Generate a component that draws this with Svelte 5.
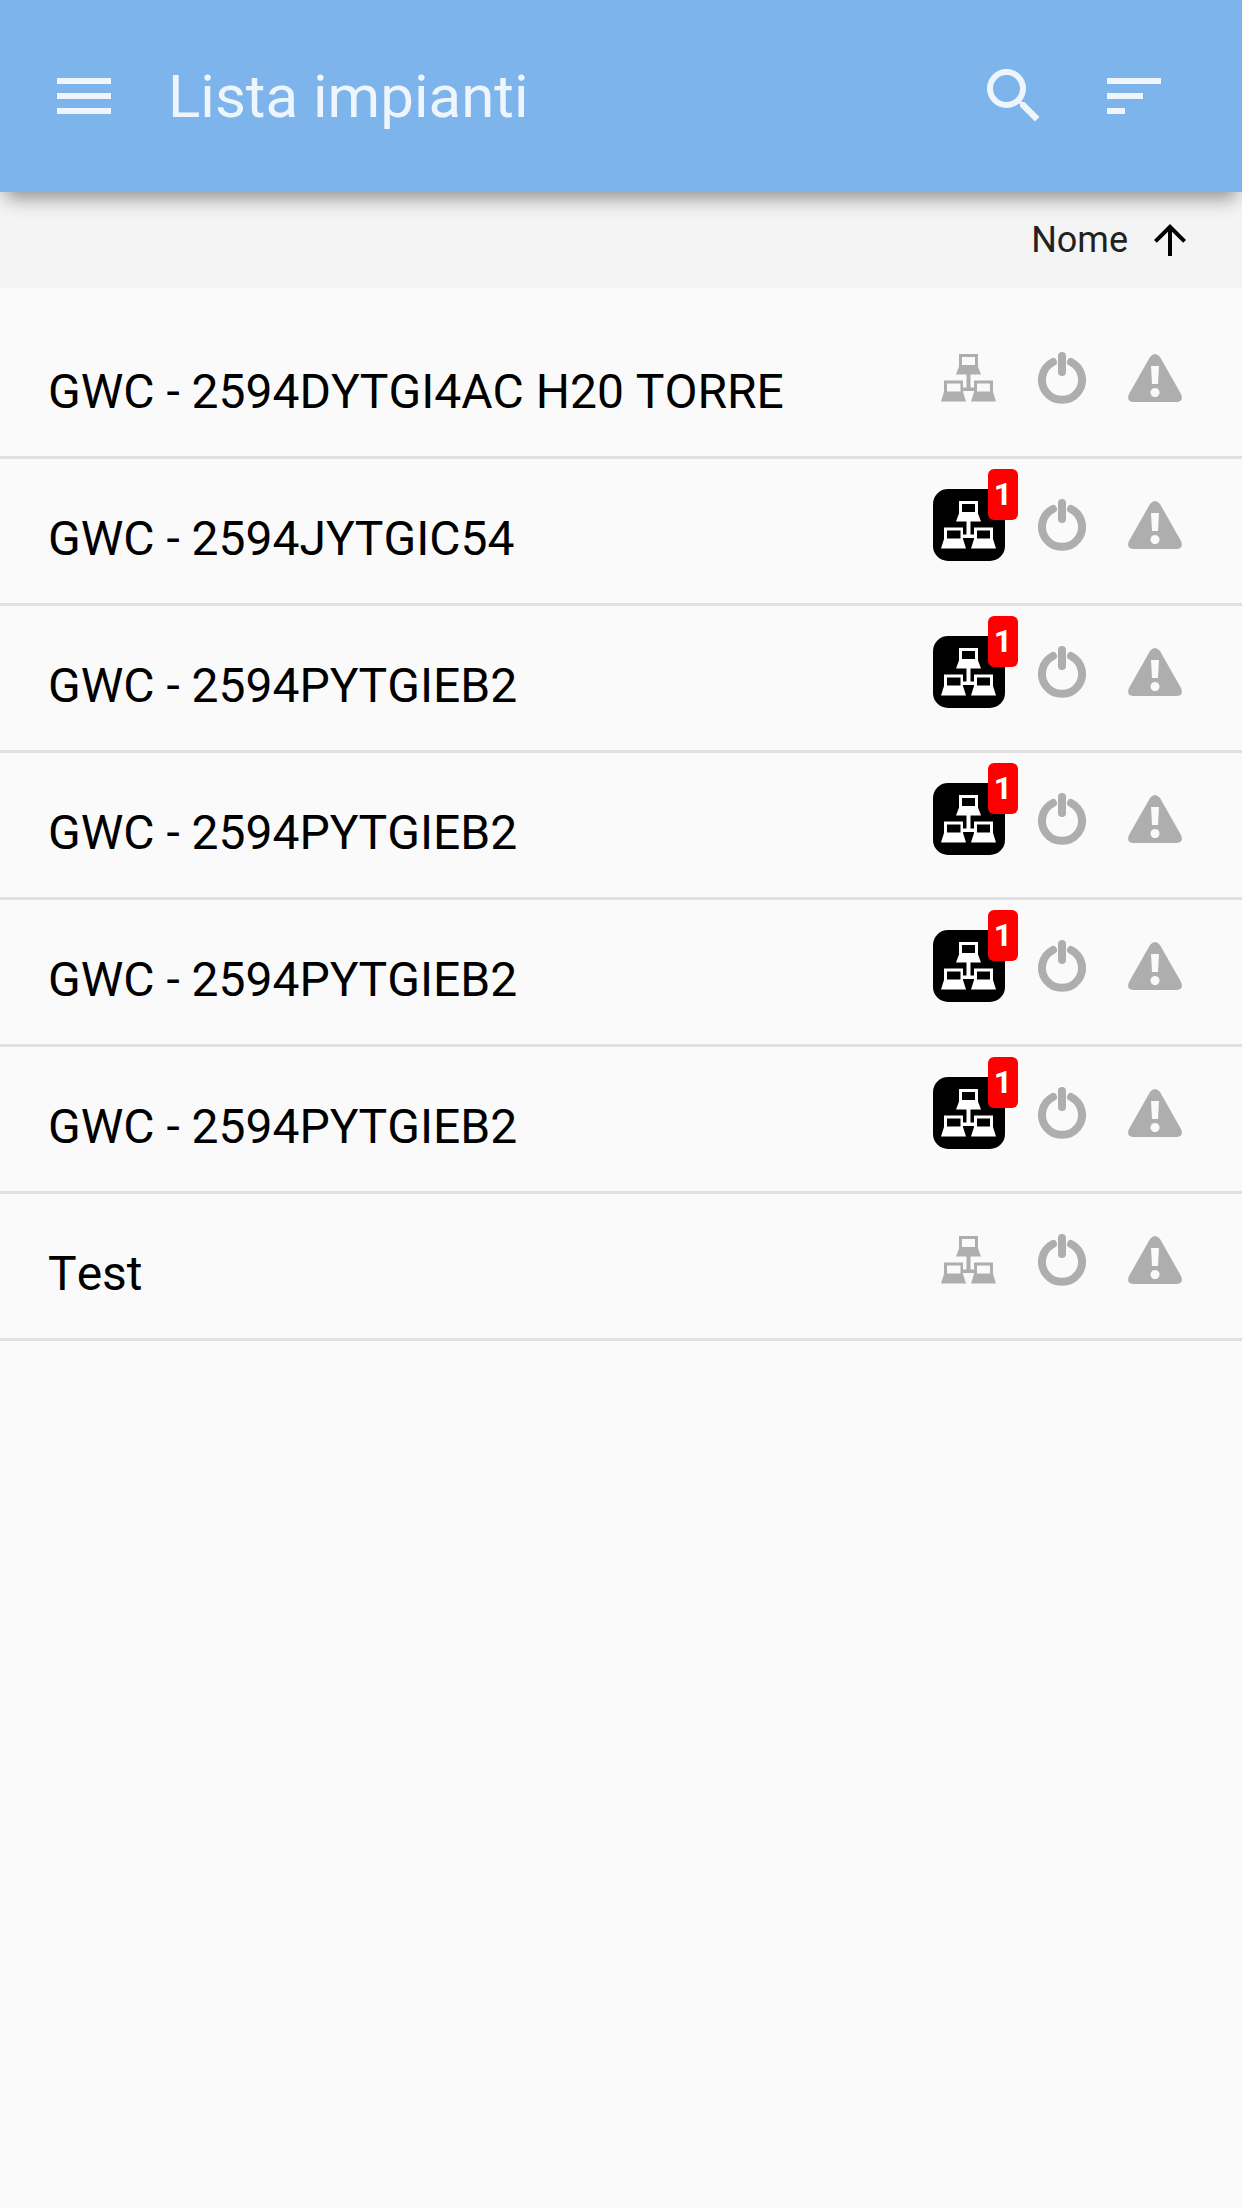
<script>
    const plants = [
        { name: 'GWC - 2594DYTGI4AC H20 TORRE', gateways: 0 },
        { name: 'GWC - 2594JYTGIC54', gateways: 1 },
        { name: 'GWC - 2594PYTGIEB2', gateways: 1 },
        { name: 'GWC - 2594PYTGIEB2', gateways: 1 },
        { name: 'GWC - 2594PYTGIEB2', gateways: 1 },
        { name: 'GWC - 2594PYTGIEB2', gateways: 1 },
        { name: 'Test', gateways: 0 },
    ];

    let ascending = $state(true);
    const rows = $derived(ascending ? plants : [...plants].reverse());
</script>

<header class="toolbar">
    <button class="icon-button" aria-label="Menu">
        <svg viewBox="0 0 24 24"><path d="M3 18h18v-2H3v2zm0-5h18v-2H3v2zm0-7v2h18V6H3z" /></svg>
    </button>
    <h1>Lista impianti</h1>
    <button class="icon-button" aria-label="Cerca">
        <svg viewBox="0 0 24 24"><path d="M15.5 14h-.79l-.28-.27A6.471 6.471 0 0 0 16 9.5 6.5 6.5 0 1 0 9.5 16c1.61 0 3.09-.59 4.23-1.57l.27.28v.79l5 4.99L20.49 19l-4.99-5zm-6 0C7.01 14 5 11.99 5 9.5S7.01 5 9.5 5 14 7.01 14 9.5 11.99 14 9.5 14z" /></svg>
    </button>
    <button class="icon-button" aria-label="Ordina">
        <svg viewBox="0 0 24 24"><path d="M3 18h6v-2H3v2zM3 6v2h18V6H3zm0 7h12v-2H3v2z" /></svg>
    </button>
</header>

<div class="sort-bar">
    <button class="sort" onclick={() => (ascending = !ascending)}>
        Nome
        <svg class:flipped={!ascending} viewBox="0 0 24 24"><path d="M4 12l1.41 1.41L11 7.83V20h2V7.83l5.58 5.59L20 12l-8-8-8 8z" /></svg>
    </button>
</div>

<ul class="plants">
    {#each rows as plant}
        <li>
            <span class="name">{plant.name}</span>
            <div class="status">
                <span class="network" class:active={plant.gateways > 0}>
                    <svg viewBox="0 0 56 48">
                        <path d="M25.5 20h4v13.5h5V37H21v-3.5h4.5z" />
                        <path fill-rule="evenodd" d="M18 0h19v12.5l3 8H15l3-8zM21 3v8h13V3z" />
                        <path fill-rule="evenodd" d="M3 26.5h19V38l3 9.5H0L3 38zM6 29.5v8h13.5v-8z" />
                        <path fill-rule="evenodd" d="M33 26.5h19V38l3 9.5H30l3-9.5zM36 29.5v8h13v-8z" />
                    </svg>
                    {#if plant.gateways > 0}
                        <span class="badge">{plant.gateways}</span>
                    {/if}
                </span>
                <svg class="power" viewBox="0 0 48 52">
                    <path d="M15 10A20 20 0 1 0 33 10" />
                    <path d="M24 4v16" />
                </svg>
                <svg class="warning" viewBox="0 0 54 48">
                    <path fill-rule="evenodd" d="M22 3q5-6 10 0l21 37q3 7-4 8H5q-7-1-4-8zM23 12l1 18h6l1-18zM27 34a4.5 4.5 0 1 0 .01 0z" />
                </svg>
            </div>
        </li>
    {/each}
</ul>

<style>
    :global(body) {
        margin: 0;
        background: #fafafa;
        font-family: Roboto, sans-serif;
    }
    button {
        padding: 0;
        border: 0;
        background: none;
        font: inherit;
        color: inherit;
        cursor: pointer;
    }
    svg {
        display: block;
        fill: currentColor;
    }
    .toolbar {
        position: relative;
        display: flex;
        align-items: center;
        gap: 48px;
        height: 192px;
        padding: 0 72px 0 48px;
        box-sizing: border-box;
        background: #7cb4eb;
        color: rgba(255, 255, 255, 0.87);
        box-shadow: 0 12px 18px -6px rgba(0, 0, 0, 0.42);
    }
    .toolbar h1 {
        flex: 1;
        margin: 0;
        padding-top: 2px;
        font-size: 60px;
        font-weight: 400;
        line-height: 72px;
    }
    .icon-button svg {
        width: 72px;
        height: 72px;
    }
    .sort-bar {
        display: flex;
        justify-content: flex-end;
        height: 96px;
        padding: 0 48px;
        background: #f4f4f4;
    }
    .sort {
        display: flex;
        align-items: center;
        gap: 18px;
        font-size: 36px;
        color: #212121;
    }
    .sort svg {
        width: 48px;
        height: 48px;
        color: #000;
    }
    .sort .flipped {
        transform: rotate(180deg);
    }
    .plants {
        margin: 0;
        padding: 24px 0 0;
        list-style: none;
    }
    .plants li {
        display: flex;
        align-items: flex-start;
        justify-content: space-between;
        height: 144px;
        padding: 0 60px 0 48px;
        border-bottom: 3px solid #e0e0e0;
    }
    .name {
        padding-top: 50px;
        font-size: 48px;
        font-kerning: none;
        line-height: 60px;
        color: #000;
    }
    .status {
        display: flex;
        align-items: center;
        padding-top: 30px;
        color: #aeaeae;
    }
    .network {
        position: relative;
        display: grid;
        place-items: center;
        width: 72px;
        height: 72px;
        margin-right: 33px;
        border-radius: 15px;
    }
    .network svg {
        width: 56px;
        height: 48px;
    }
    .network.active {
        background: #000;
        color: #fff;
    }
    .badge {
        position: absolute;
        top: -20px;
        right: -13px;
        width: 30px;
        border-radius: 6px;
        background: #f00;
        font-size: 32px;
        font-weight: 700;
        line-height: 51px;
        text-align: center;
    }
    .power {
        width: 48px;
        height: 52px;
        margin-right: 42px;
        fill: none;
        stroke: currentColor;
        stroke-width: 8;
        stroke-linecap: round;
    }
    .warning {
        width: 54px;
        height: 48px;
    }
</style>
